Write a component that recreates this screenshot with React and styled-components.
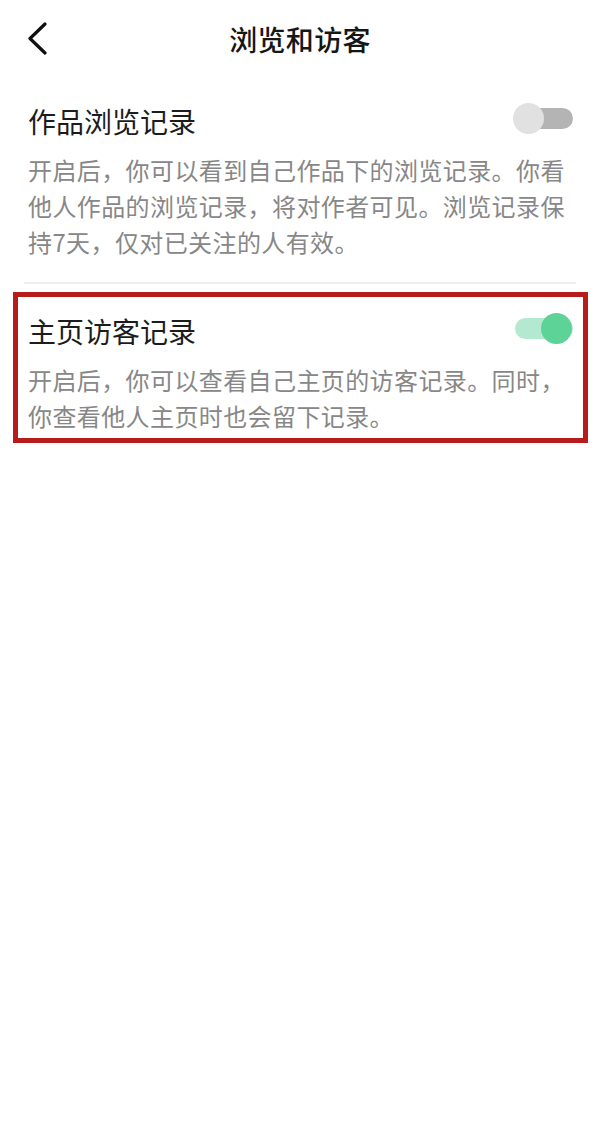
import React from "react"
import styled, { createGlobalStyle } from "styled-components"

const GlobalStyle = createGlobalStyle`
  body {
    margin: 0;
    background: #fff;
    font-family: "Noto Sans CJK SC", "Noto Sans", sans-serif;
  }
`

const Page = styled.div`
  width: 600px;
  min-height: 1135px;
  background: #fff;
`

const Header = styled.header`
  height: 78px;
  display: grid;
  grid-template-columns: 1fr auto 1fr;
  align-items: center;
`

const BackButton = styled.button`
  justify-self: start;
  margin-left: 24px;
  padding: 0;
  border: none;
  background: none;
  display: flex;
  cursor: pointer;
`

const Title = styled.h1`
  margin: 0;
  font-size: 28px;
  font-weight: 500;
  color: #161616;
  letter-spacing: 0.3px;
`

const List = styled.div`
  padding: 0 24px;
`

const Item = styled.section`
  padding: ${(p) => (p.$marked ? "14px 10px 4px 10px" : "23px 3px 22px 4px")};
  margin: ${(p) => (p.$marked ? "8px -12px 0 -11px" : "0")};
  border: ${(p) => (p.$marked ? "5px solid #b71c1c" : "none")};
  border-bottom: ${(p) => (p.$marked ? "5px solid #b71c1c" : "2px solid #eeeeee")};
`

const TitleRow = styled.div`
  display: flex;
  align-items: center;
  justify-content: space-between;
  height: 40px;
`

const ItemTitle = styled.div`
  font-size: 28px;
  line-height: 40px;
  color: #1c1c1c;
`

const Desc = styled.p`
  margin: 11px 0 0;
  max-width: 548px;
  font-size: 24px;
  line-height: 36px;
  letter-spacing: 0.4px;
  color: #878787;
`

const Switch = styled.div`
  position: relative;
  width: 60px;
  height: 32px;
  margin-top: -5px;
  flex-shrink: 0;

  &::before {
    content: "";
    position: absolute;
    left: 2px;
    right: 0;
    top: 5px;
    height: 21px;
    border-radius: 11px;
    background: ${(p) => (p.$on ? "#b3e9d0" : "#b4b4b4")};
  }

  &::after {
    content: "";
    position: absolute;
    top: 0;
    left: ${(p) => (p.$on ? "28px" : "0")};
    width: 31px;
    height: 31px;
    border-radius: 50%;
    background: ${(p) => (p.$on ? "#5dd398" : "#e1e1e1")};
  }
`

const settings = [
  {
    title: "作品浏览记录",
    desc: "开启后，你可以看到自己作品下的浏览记录。你看他人作品的浏览记录，将对作者可见。浏览记录保持7天，仅对已关注的人有效。",
    on: false,
  },
  {
    title: "主页访客记录",
    desc: "开启后，你可以查看自己主页的访客记录。同时，你查看他人主页时也会留下记录。",
    on: true,
    marked: true,
  },
]

const App = () => {
  return (
    <>
      <GlobalStyle />
      <Page>
        <Header>
          <BackButton aria-label="返回">
            <svg width="24" height="34" viewBox="0 0 24 34" fill="none">
              <path
                d="M21 2 L6 16.5 L21 31"
                stroke="#111"
                strokeWidth="3.2"
                strokeLinecap="round"
                strokeLinejoin="round"
              />
            </svg>
          </BackButton>
          <Title>浏览和访客</Title>
          <div />
        </Header>
        <List>
          {settings.map((s) => (
            <Item key={s.title} $marked={s.marked}>
              <TitleRow>
                <ItemTitle>{s.title}</ItemTitle>
                <Switch $on={s.on} />
              </TitleRow>
              <Desc>{s.desc}</Desc>
            </Item>
          ))}
        </List>
      </Page>
    </>
  )
}

export default App
